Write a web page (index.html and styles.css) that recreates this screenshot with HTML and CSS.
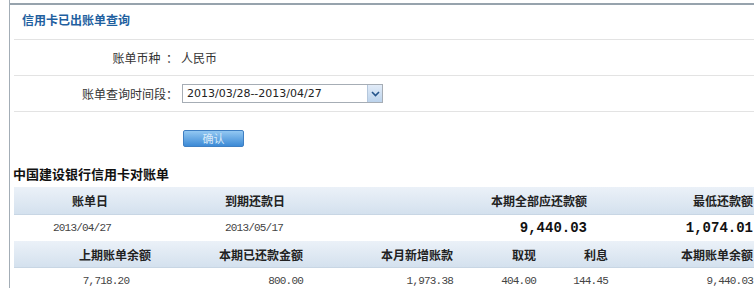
FILE: index.html
```html
<!DOCTYPE html>
<html lang="zh-CN">
<head>
    <meta charset="UTF-8">
    <meta name="viewport" content="width=device-width, initial-scale=1.0">
    <title>信用卡已出账单查询</title>
    <link rel="stylesheet" href="styles.css">
</head>
<body>
    <div class="page">
      <div class="panel">
        <div class="panel-title">信用卡已出账单查询</div>

        <div class="form-row">
          <div class="label">账单币种&nbsp;&nbsp;：</div>
          <div class="value">人民币</div>
        </div>

        <div class="form-row">
          <div class="label">账单查询时间段：</div>
          <div class="select">
            <span class="select-text">2013/03/28--2013/04/27</span>
            <span class="select-arrow">
              <svg width="9" height="6" viewBox="0 0 9 6"><path d="M1 1 L4.5 4.5 L8 1" fill="none" stroke="#24548a" stroke-width="1.6"/></svg>
            </span>
          </div>
        </div>

        <div class="actions">
          <button type="button" class="btn">确认</button>
        </div>

        <div class="bill-title">中国建设银行信用卡对账单</div>

        <table class="bill bill-top">
          <colgroup>
            <col style="width:152px">
            <col style="width:234px">
            <col style="width:187px">
            <col style="width:167px">
          </colgroup>
          <tr class="head">
            <th class="c-center">账单日</th>
            <th class="c-due">到期还款日</th>
            <th class="c-right">本期全部应还款额</th>
            <th class="c-last">最低还款额</th>
          </tr>
          <tr class="data">
            <td class="num c-date">2013/04/27</td>
            <td class="num c-due">2013/05/17</td>
            <td class="big c-right">9,440.03</td>
            <td class="big c-last">1,074.01</td>
          </tr>
        </table>

        <table class="bill bill-bottom">
          <colgroup>
            <col style="width:202px">
            <col style="width:87px">
            <col style="width:150px">
            <col style="width:92px">
            <col style="width:75px">
            <col style="width:134px">
          </colgroup>
          <tr class="head">
            <th class="c-center">上期账单余额</th>
            <th class="c-right">本期已还款金额</th>
            <th class="c-right">本月新增账款</th>
            <th class="c-cash">取现</th>
            <th class="c-rate">利息</th>
            <th class="c-last">本期账单余额</th>
          </tr>
          <tr class="data">
            <td class="num c-prev">7,718.20</td>
            <td class="num c-right">800.00</td>
            <td class="num c-right">1,973.38</td>
            <td class="num c-cash">404.00</td>
            <td class="num c-rate">144.45</td>
            <td class="num c-last">9,440.03</td>
          </tr>
        </table>
      </div>
    </div>
</body>
</html>
```

FILE: styles.css
```css
body {
  margin: 0;
  padding: 0;
  background: #fff;
  font-family: "Noto Sans CJK SC", sans-serif;
  font-size: 12px;
  color: #333;
  overflow: hidden;
}
.page {
  margin-left: 9px;
  padding-top: 3px;
  min-height: 288px;
  border-left: 1px solid #a3adb6;
}
.panel {
  border-top: 2px solid #97a3ad;
  padding-left: 4px;
}
.panel-title {
  line-height: 30px;
  padding: 0 0 4px 8px;
  color: #1f5f9f;
  font-weight: 700;
  font-size: 12px;
  border-bottom: 1px solid #e3e3e3;
}
.form-row {
  height: 35px;
  display: flex;
  align-items: center;
  border-bottom: 1px solid #e3e3e3;
}
.label {
  width: 164px;
  text-align: right;
  color: #333;
}
.value {
  margin-left: 3px;
  color: #333;
}
.select {
  margin-left: 4px;
  width: 199px;
  height: 17px;
  border: 1px solid #a6adb5;
  display: flex;
  align-items: center;
  justify-content: space-between;
  background: #fff;
}
.select-text {
  padding-left: 4px;
  font-family: "DejaVu Sans", sans-serif;
  font-size: 11px;
  color: #222;
}
.select-arrow {
  width: 14px;
  height: 17px;
  display: flex;
  align-items: center;
  justify-content: center;
  background: linear-gradient(#e2ecf8, #bcd3ec);
  border-left: 1px solid #b5c7dc;
}
.actions {
  padding: 18px 0 0 169px;
  height: 17px;
}
.btn {
  width: 61px;
  height: 17px;
  padding: 0;
  border: 1px solid #3f7fc2;
  border-radius: 2px;
  background: linear-gradient(#93c8f2, #3c8ad6);
  color: #d9eaf8;
  font-family: "Noto Sans CJK SC", sans-serif;
  font-size: 11px;
  line-height: 15px;
  display: block;
}
.bill-title {
  margin-top: 18px;
  margin-left: -1px;
  line-height: 18px;
  margin-bottom: 4px;
  font-size: 13px;
  font-weight: 700;
  color: #111;
}
.bill {
  width: 740px;
  table-layout: fixed;
  border-collapse: collapse;
  border-spacing: 0;
}
.bill th,
.bill td {
  padding: 0;
  white-space: nowrap;
  overflow: visible;
}
.head th {
  background: linear-gradient(#ebf1f8, #d4e1ee);
  border-bottom: 1px solid #c8d6e4;
  font-size: 12px;
  font-weight: 700;
  color: #222;
}
.bill-top .head th {
  height: 27px;
}
.bill-top .data td {
  height: 26px;
}
.bill-bottom .head th {
  height: 26px;
}
.bill-bottom .data td {
  height: 26px;
}
.num {
  font-family: "Liberation Mono", monospace;
  font-size: 11px;
  letter-spacing: -0.8px;
  color: #444;
}
.big {
  font-family: "Liberation Mono", monospace;
  font-size: 14px;
  font-weight: 700;
  color: #111;
}
.c-center {
  text-align: center;
}
.c-date {
  text-align: center;
  padding-right: 16px !important;
}
.c-prev {
  text-align: center;
  padding-right: 18px !important;
}
.c-due {
  text-align: left;
  padding-left: 59px !important;
}
.c-right {
  text-align: right;
}
.c-cash {
  text-align: right;
  padding-right: 9px !important;
}
.c-rate {
  text-align: right;
  padding-right: 12px !important;
}
.c-last {
  text-align: right;
  padding-right: 1px !important;
}
```
